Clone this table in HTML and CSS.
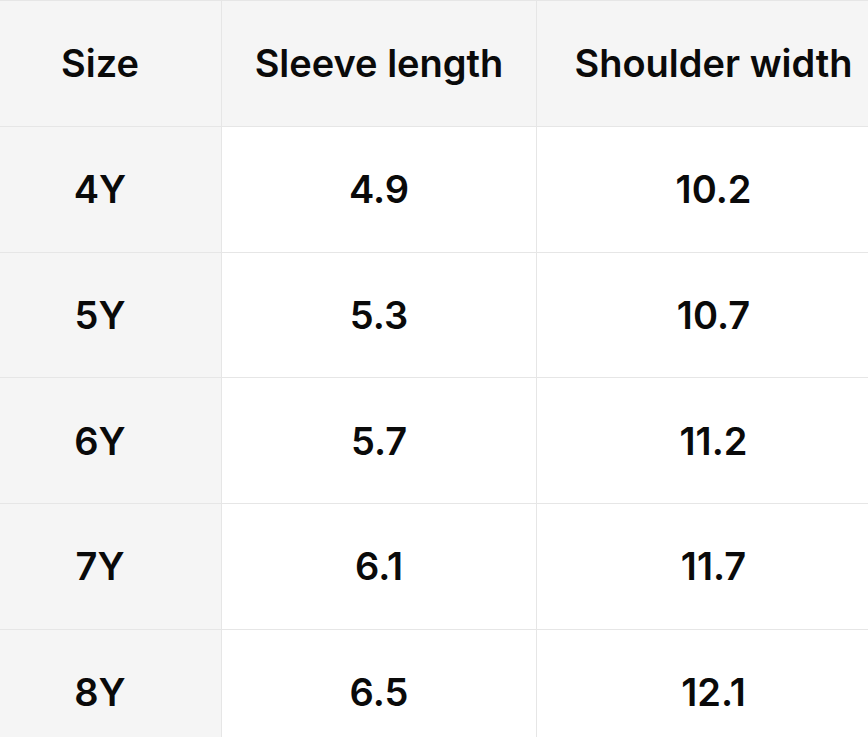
FILE: index.html
```html
<!DOCTYPE html>
<html>
<head>
<meta charset="utf-8">
<link rel="stylesheet" href="styles.css">
</head>
<body>
<div class="wrap">
<table class="size-table">
  <thead>
    <tr><th class="c1">Size</th><th class="c2">Sleeve length</th><th class="c3">Shoulder width</th></tr>
  </thead>
  <tbody>
    <tr><td class="c1">4Y</td><td>4.9</td><td>10.2</td></tr>
    <tr><td class="c1">5Y</td><td>5.3</td><td>10.7</td></tr>
    <tr><td class="c1">6Y</td><td>5.7</td><td>11.2</td></tr>
    <tr><td class="c1">7Y</td><td>6.1</td><td>11.7</td></tr>
    <tr><td class="c1">8Y</td><td>6.5</td><td>12.1</td></tr>
  </tbody>
</table>
</div>
</body>
</html>
```
FILE: styles.css
```css
html, body {
  margin: 0;
  padding: 0;
  background: #ffffff;
  overflow: hidden;
}
.wrap {
  width: 868px;
  height: 737px;
  overflow: hidden;
}
.size-table {
  border-collapse: collapse;
  table-layout: fixed;
  width: 912px;
  margin-left: -22px;
  font-family: Inter, "Liberation Sans", sans-serif;
  font-weight: 600;
  font-size: 38px;
  color: #0a0a0a;
}
.size-table th, .size-table td {
  height: 125.75px;
  box-sizing: border-box;
  padding: 0;
  text-align: center;
  vertical-align: middle;
  border: 1.5px solid #e6e6e6;
  font-weight: 600;
}
.size-table th {
  background: #f5f5f5;
}
.size-table td.c1 {
  background: #f5f5f5;
}
.c1 { width: 243px; }
.c2 { width: 315px; }
.c3 { width: 354px; }
```
